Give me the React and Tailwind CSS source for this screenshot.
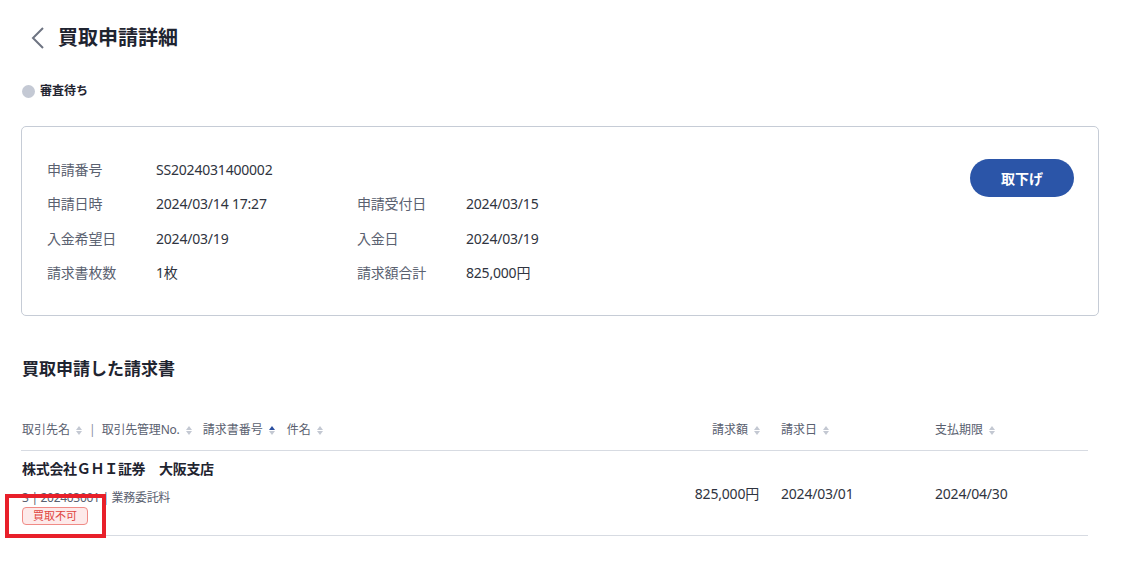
import React from "react";

const FONT = { fontFamily: '"Noto Sans", "Noto Sans CJK JP", sans-serif' };

function Sort({ active }) {
  return (
    <span className="inline-flex flex-col items-center gap-[1px] ml-[6px] mt-[1px]">
      <svg width="6" height="4" viewBox="0 0 6 4">
        <path d="M3 0 L6 4 L0 4 Z" fill={active ? "#2b4fa0" : "#c3c8d2"} />
      </svg>
      <svg width="6" height="4" viewBox="0 0 6 4">
        <path d="M0 0 L6 0 L3 4 Z" fill="#c3c8d2" />
      </svg>
    </span>
  );
}

function Row({ a, b, c, d }) {
  return (
    <div className="grid grid-cols-[109px_201px_109px_1fr] h-[35px] items-center text-[14px] tracking-[-0.2px]">
      <span className="text-[#5a6170]">{a}</span>
      <span className="text-[#2f3440]">{b}</span>
      <span className="text-[#5a6170]">{c}</span>
      <span className="text-[#2f3440]">{d}</span>
    </div>
  );
}

export default function App() {
  return (
    <div className="relative w-[1136px] h-[569px] bg-white overflow-hidden" style={FONT}>
      <div className="pl-[21px] pr-[37px]">
        {/* header */}
        <div className="flex items-center h-[36px] mt-[20px] pl-[8px]">
          <svg width="16" height="24" viewBox="0 0 16 24" className="mr-[13px]">
            <polyline points="14,2 4,12 14,22" fill="none" stroke="#6e7482" strokeWidth="2" />
          </svg>
          <h1 className="text-[20px] font-bold text-[#1f2430] leading-none">買取申請詳細</h1>
        </div>

        {/* status */}
        <div className="flex items-center mt-[28px] h-[14px]">
          <div className="shrink-0 w-[13px] h-[13px] rounded-full bg-[#c4c9d4] ml-[1px] mr-[5px]" />
          <span className="text-[12px] font-bold text-[#1f2430]">審査待ち</span>
        </div>

        {/* card */}
        <div className="mt-[28px] border border-[#c6ccd6] rounded-[5px] h-[190px] flex justify-between pl-[25px] pr-[24px] py-[25px]">
          <div className="flex flex-col w-[650px]">
            <Row a="申請番号" b="SS2024031400002" c="" d="" />
            <Row a="申請日時" b="2024/03/14 17:27" c="申請受付日" d="2024/03/15" />
            <Row a="入金希望日" b="2024/03/19" c="入金日" d="2024/03/19" />
            <Row a="請求書枚数" b="1枚" c="請求額合計" d="825,000円" />
          </div>
          <button className="mt-[7px] w-[104px] h-[38px] rounded-full bg-[#2b55a8] text-white text-[14px] font-bold">
            取下げ
          </button>
        </div>

        {/* section title */}
        <h2 className="mt-[41px] text-[17px] font-bold text-[#1f2430] leading-[24px] pl-[1px]">買取申請した請求書</h2>

        {/* table */}
        <div className="mt-[39px] w-[1067px]">
          <div className="flex items-center h-[31px] border-b border-[#d7dbe2] text-[12px] text-[#5a6170] pb-[10px]">
            <div className="flex-1 flex items-center pl-[1px]">
              <span>取引先名</span>
              <Sort />
              <span className="ml-[7px] mr-[6px] text-[#8a909c]">|</span>
              <span className="tracking-[-0.2px]">取引先管理No.</span>
              <Sort />
              <span className="ml-[11px]">請求書番号</span>
              <Sort active />
              <span className="ml-[12px]">件名</span>
              <Sort />
            </div>
            <div className="w-[140px] flex items-center justify-end pr-[21px]">
              <span>請求額</span>
              <Sort />
            </div>
            <div className="w-[154px] flex items-center">
              <span>請求日</span>
              <Sort />
            </div>
            <div className="w-[153px] flex items-center">
              <span>支払期限</span>
              <Sort />
            </div>
          </div>

          <div className="flex items-center h-[85px] border-b border-[#d7dbe2]">
            <div className="flex-1 flex flex-col pl-[1px]">
              <span className="text-[14px] font-bold text-[#1f2430] leading-[20px] mt-[-2px] tracking-[-0.3px]">株式会社ＧＨＩ証券　大阪支店</span>
              <span className="text-[12px] text-[#5a6170] leading-[16px] mt-[11px] tracking-[-0.3px]">3 | 202403001 | 業務委託料</span>
              <span className="mt-[1px] self-start text-[11px] leading-[16px] text-[#e0443e] bg-[#fdeaea] border border-[#f08b86] rounded-[4px] px-[10px]">
                買取不可
              </span>
            </div>
            <div className="w-[140px] text-right pr-[22px] text-[14px] text-[#2f3440] tracking-[-0.2px]">825,000円</div>
            <div className="w-[154px] text-[14px] text-[#2f3440] tracking-[-0.2px]">2024/03/01</div>
            <div className="w-[153px] text-[14px] text-[#2f3440] tracking-[-0.2px]">2024/04/30</div>
          </div>
        </div>
      </div>

      {/* annotation */}
      <div className="absolute left-[5px] top-[494px] w-[101px] h-[44px] border-[4px] border-[#e8202a]" />
    </div>
  );
}
